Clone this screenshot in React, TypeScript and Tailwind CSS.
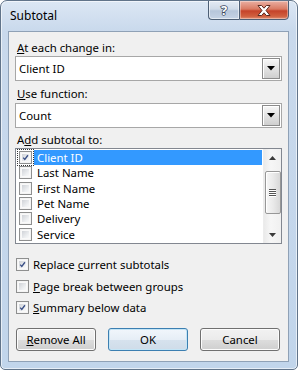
import React from "react";

const FONT = { fontFamily: '"Noto Sans", "Open Sans", sans-serif' };

function Check({ checked }: { checked: boolean }) {
  return (
    <div className="w-[13px] h-[13px] shrink-0 border border-[#8e8f8f] bg-[#f4f4f4] p-[1px]">
      <div className="w-full h-full bg-[linear-gradient(135deg,#cfd2d7,#eef0f2_70%,#f8f8f8)] border border-[#f9f9f9] relative">
        {checked && (
          <svg viewBox="0 0 9 9" className="absolute inset-0 w-full h-full">
            <path d="M1.5 4.6 L3.6 7 L7.6 1.6" fill="none" stroke="#3a4f86" strokeWidth="1.7" />
          </svg>
        )}
      </div>
    </div>
  );
}

function Combo({ value }: { value: string }) {
  return (
    <div className="h-[25px] border border-[#a7a7a7] bg-white flex items-center justify-between pl-[3px] pr-[1px]">
      <span className="text-[11.4px] leading-[15px]">{value}</span>
      <div className="w-[18px] h-[21px] border border-[#8b8b8b] bg-[linear-gradient(to_bottom,#f7f7f7,#e3e3e3_50%,#cfcfcf)] shadow-[inset_1px_1px_0_#ffffff] flex items-center justify-center">
        <svg width="8" height="5" viewBox="0 0 8 5">
          <path d="M0 0 H8 L4 4.5 Z" fill="#000" />
        </svg>
      </div>
    </div>
  );
}

function Btn({ children, def }: { children: React.ReactNode; def?: boolean }) {
  return (
    <div
      className={
        "w-[80px] h-[23px] rounded-[3px] border flex items-center justify-center text-[11.4px] leading-[15px] " +
        (def
          ? "border-[#3c7fb1] bg-[linear-gradient(to_bottom,#f1f6fb,#e6eef6_50%,#d6e2ee_51%,#cfdce9)] shadow-[inset_0_0_0_1px_#c4e5f6]"
          : "border-[#707070] bg-[linear-gradient(to_bottom,#f2f2f2,#ebebeb_50%,#dddddd_51%,#cfcfcf)] shadow-[inset_0_0_0_1px_#fcfcfc]")
      }
    >
      {children}
    </div>
  );
}

const items = ["Client ID", "Last Name", "First Name", "Pet Name", "Delivery", "Service"];

export default function App() {
  return (
    <div className="w-[298px] h-[370px] bg-white text-black" style={FONT}>
      <div className="w-full h-full rounded-t-[7px] rounded-b-[5px] border border-[#61748a] bg-[linear-gradient(to_bottom,#dce7f4,#c9d9ec_30px,#c1d5eb)] shadow-[inset_0_0_0_1px_rgba(255,255,255,0.6)] flex flex-col overflow-hidden">
        {/* title bar */}
        <div className="h-[30px] flex items-start justify-between shrink-0">
          <span className="pl-[9px] pt-[7px] text-[12px] leading-[16px]">Subtotal</span>
          <div className="flex mr-[8px] -mt-px">
            <div className="w-[31px] h-[20px] border border-[#4d5f75] border-r-0 rounded-bl-[4px] bg-[linear-gradient(to_bottom,#e4ebf4,#d0dbe8_45%,#b6c6da_55%,#c5d3e5)] shadow-[inset_0_0_0_1px_rgba(255,255,255,0.55)] flex items-center justify-center">
              <svg width="14" height="18" viewBox="0 0 14 18">
                <text x="7" y="14" textAnchor="middle" fontSize="13" fontWeight="bold" fontFamily="Noto Sans, sans-serif" fill="#ffffff" stroke="#3b4a5e" strokeWidth="1.5" paintOrder="stroke">?</text>
              </svg>
            </div>
            <div className="w-[50px] h-[20px] border border-[#4d5f75] rounded-br-[4px] bg-[linear-gradient(to_bottom,#eab0a3,#d97a63_45%,#c5432a_55%,#d0603f_85%,#e09076)] shadow-[inset_0_0_0_1px_rgba(255,255,255,0.35)] flex items-center justify-center">
              <svg width="16" height="13" viewBox="0 0 16 13">
                <path
                  d="M2 1.5 H5.6 L8 4.2 L10.4 1.5 H14 L10 6.5 L14 11.5 H10.4 L8 8.8 L5.6 11.5 H2 L6 6.5 Z"
                  fill="#ffffff"
                  stroke="#5a2a20"
                  strokeWidth="1"
                  strokeLinejoin="round"
                />
              </svg>
            </div>
          </div>
        </div>

        {/* client area */}
        <div className="flex-1 ml-[7px] mr-[8px] mb-[7px] border border-[#8fa1b6] bg-[#f0f0f0] pl-[6px] pr-[6px] pt-[8px] flex flex-col text-[11.4px]">
          <div className="h-[15px] leading-[15px] pl-[2px]"><u>A</u>t each change in:</div>
          <div className="mt-[1px]"><Combo value="Client ID" /></div>
          <div className="mt-[5px] h-[15px] leading-[15px] pl-[2px]"><u>U</u>se function:</div>
          <div className="mt-[2px]"><Combo value="Count" /></div>
          <div className="mt-[4px] h-[15px] leading-[15px] pl-[2px]">A<u>d</u>d subtotal to:</div>
          <div className="mt-[1px] h-[96px] border border-[#828790] bg-white flex">
            <div className="flex-1 pt-[1px] flex flex-col">
              {items.map((it, i) => (
                <div key={it} className="h-[15.3px] flex items-center">
                  <div className={"ml-[1px] p-[1px] border " + (i === 0 ? "border-dotted border-[#333]" : "border-transparent")}>
                    <Check checked={i === 0} />
                  </div>
                  <div
                    className={
                      "flex-1 h-full flex items-center pl-[3px] mr-[1px] leading-[13px] " +
                      (i === 0 ? "bg-[#3399ff] text-white" : "")
                    }
                  >
                    {it}
                  </div>
                </div>
              ))}
            </div>
            <div className="w-[18px] border-l border-[#ececec] bg-[linear-gradient(to_right,#eaeaea,#f6f6f6_40%,#f0f0f0)] flex flex-col items-center">
              <div className="h-[17px] flex items-center justify-center">
                <svg width="7" height="4" viewBox="0 0 7 4"><path d="M0 4 L3.5 0 L7 4 Z" fill="#3b3b3b" /></svg>
              </div>
              <div className="mt-[5px] w-[16px] h-[43px] rounded-[2px] border border-[#979797] bg-[linear-gradient(to_right,#f6f6f6,#eaeaea_50%,#d8d8d8)] shadow-[inset_1px_1px_0_#ffffff] flex flex-col items-center justify-center gap-[1px]">
                {[0, 1, 2, 3].map((k) => (
                  <div key={k} className="w-[7px] h-[1px] bg-[#555] shadow-[0_1px_0_#ffffff]" />
                ))}
              </div>
              <div className="flex-1" />
              <div className="h-[17px] flex items-center justify-center">
                <svg width="7" height="4" viewBox="0 0 7 4"><path d="M0 0 L7 0 L3.5 4 Z" fill="#3b3b3b" /></svg>
              </div>
            </div>
          </div>

          <div className="mt-[10px] flex flex-col">
            <div className="h-[21.5px] flex items-center gap-[4px] pl-[1px]">
              <Check checked />
              <span>Replace <u>c</u>urrent subtotals</span>
            </div>
            <div className="h-[21.5px] flex items-center gap-[4px] pl-[1px]">
              <Check checked={false} />
              <span><u>P</u>age break between groups</span>
            </div>
            <div className="h-[21.5px] flex items-center gap-[4px] pl-[1px]">
              <Check checked />
              <span><u>S</u>ummary below data</span>
            </div>
          </div>

          <div className="mt-[9.5px] flex gap-[12px] pl-[1px]">
            <Btn><span><u>R</u>emove All</span></Btn>
            <Btn def>OK</Btn>
            <Btn>Cancel</Btn>
          </div>
        </div>
      </div>
    </div>
  );
}
